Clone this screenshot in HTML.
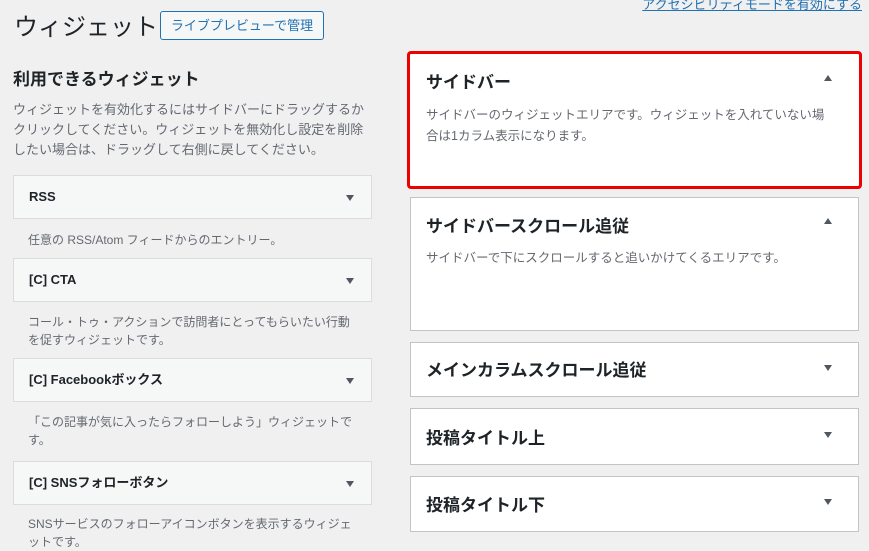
<!DOCTYPE html>
<html><head><meta charset="utf-8"><style>
*{margin:0;padding:0;box-sizing:border-box}
body{width:869px;height:541px;overflow:hidden;background:#f0f0f1;font-family:"Liberation Sans","Noto Sans CJK JP",sans-serif;color:#1d2327;position:relative}
.a{position:absolute;white-space:nowrap}
.btn{left:160px;top:11px;width:164px;height:29px;border:1px solid #2271b1;border-radius:3px;color:#2271b1;font-size:13px;line-height:27px;text-align:center;background:#f6f7f7}
.lnk{right:7px;top:-6px;font-size:13px;color:#2271b1;text-decoration:underline}
.desc{font-size:13px;color:#646970;line-height:20px}
.w{position:absolute;left:13px;width:359px;height:44px;background:#f6f7f7;border:1px solid #dcdcde;font-size:13px;font-weight:bold;padding-left:15px;line-height:42px}
.tri{position:absolute;width:0;height:0;border-left:4px solid transparent;border-right:4px solid transparent}
.down{border-top:6px solid #50575e}
.up{border-bottom:6px solid #50575e}
.wd{position:absolute;left:28px;font-size:12px;color:#646970;line-height:18px}
.s{position:absolute;left:410px;width:449px;background:#fff;border:1px solid #c3c4c7}
.s h3{position:absolute;left:15px;font-size:17px;font-weight:bold;white-space:nowrap}
.s p{position:absolute;left:15px;font-size:12.5px;color:#646970;line-height:21px}
</style></head><body>
<div class="a" style="left:14px;top:7px;font-size:24px;font-weight:400;letter-spacing:0px">ウィジェット</div>
<div class="a btn">ライブプレビューで管理</div>
<div class="a lnk">アクセシビリティモードを有効にする</div>
<div class="a" style="left:13px;top:65px;font-size:17px;font-weight:bold">利用できるウィジェット</div>
<div class="a desc" style="left:13px;top:100px">ウィジェットを有効化するにはサイドバーにドラッグするか<br>クリックしてください。ウィジェットを無効化し設定を削除<br>したい場合は、ドラッグして右側に戻してください。</div>

<div class="w" style="top:175px">RSS<span class="tri down" style="left:332px;top:19px"></span></div>
<div class="wd" style="top:231px">任意の RSS/Atom フィードからのエントリー。</div>
<div class="w" style="top:258px">[C] CTA<span class="tri down" style="left:332px;top:19px"></span></div>
<div class="wd" style="top:313px">コール・トゥ・アクションで訪問者にとってもらいたい行動<br>を促すウィジェットです。</div>
<div class="w" style="top:358px">[C] Facebookボックス<span class="tri down" style="left:332px;top:19px"></span></div>
<div class="wd" style="top:413px">「この記事が気に入ったらフォローしよう」ウィジェットで<br>す。</div>
<div class="w" style="top:461px">[C] SNSフォローボタン<span class="tri down" style="left:332px;top:19px"></span></div>
<div class="wd" style="top:515px">SNSサービスのフォローアイコンボタンを表示するウィジェ<br>ットです。</div>

<div class="s" style="left:407px;top:51px;width:455px;height:138px;border:3px solid #e00;border-radius:4px">
<h3 style="left:16px;top:14px">サイドバー</h3><span class="tri up" style="left:414px;top:21px"></span>
<p style="left:16px;top:51px">サイドバーのウィジェットエリアです。ウィジェットを入れていない場<br>合は1カラム表示になります。</p></div>
<div class="s" style="top:197px;height:134px">
<h3 style="top:14px">サイドバースクロール追従</h3><span class="tri up" style="left:413px;top:20px"></span>
<p style="top:50px">サイドバーで下にスクロールすると追いかけてくるエリアです。</p></div>
<div class="s" style="top:342px;height:55px"><h3 style="top:13px">メインカラムスクロール追従</h3><span class="tri down" style="left:413px;top:22px"></span></div>
<div class="s" style="top:408px;height:57px"><h3 style="top:15px">投稿タイトル上</h3><span class="tri down" style="left:413px;top:23px"></span></div>
<div class="s" style="top:476px;height:56px"><h3 style="top:14px">投稿タイトル下</h3><span class="tri down" style="left:413px;top:22px"></span></div>
</body></html>
